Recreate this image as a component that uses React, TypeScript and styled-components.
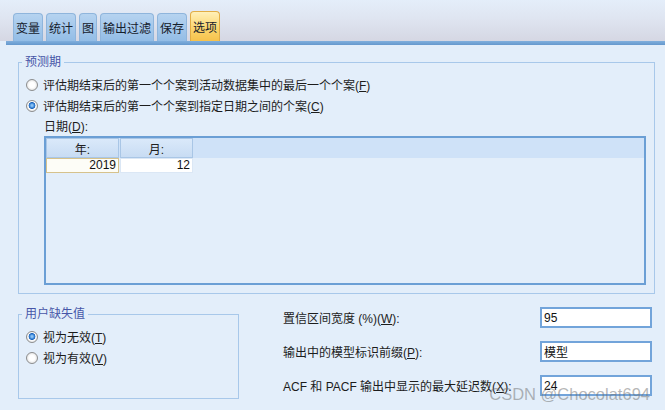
import React from "react";
import styled, { createGlobalStyle, css } from "styled-components";

const GlobalStyle = createGlobalStyle`
  html, body {
    margin: 0;
    padding: 0;
  }
  body {
    background: #e3eefa;
    font-family: "Liberation Sans", "Noto Sans CJK SC", sans-serif;
    font-size: 12px;
    color: #1c1c1c;
  }
`;

const Window = styled.div`
  position: relative;
  width: 665px;
  height: 410px;
  overflow: hidden;
  background: #e3eefa;
  display: flex;
  flex-direction: column;
`;

const TabStrip = styled.div`
  height: 41px;
  box-sizing: border-box;
  display: flex;
  align-items: flex-end;
  gap: 3px;
  padding-left: 13px;
  background: linear-gradient(#e4eefa 0%, #dfe5f1 45%, #d5d7e3 100%);
`;

const TabButton = styled.div<{ $active?: boolean }>`
  height: 28px;
  box-sizing: border-box;
  padding: 0 2px;
  display: flex;
  align-items: center;
  justify-content: center;
  border: 1px solid #8fb5dc;
  border-bottom: none;
  border-radius: 4px 4px 0 0;
  background: linear-gradient(#b6d3f0, #93bde6);
  color: #15202c;
  font-size: 12px;

  ${(p) =>
    p.$active &&
    css`
      height: 30px;
      border-color: #e2ad45;
      background: linear-gradient(#fff0b8, #fbd36a 60%, #f6c24c);
    `}
`;

const TabBar = styled.div`
  height: 4px;
  margin-left: 6px;
  background: linear-gradient(#80afdd, #6598cd);
`;

const Content = styled.div`
  padding: 9px 10px 0 18px;
  display: flex;
  flex-direction: column;
`;

const GroupBox = styled.fieldset<{ $width?: number; $height?: number }>`
  margin: 0;
  min-width: 0;
  padding: 0 8px 8px 7px;
  border: 1px solid #a8c8ea;
  box-sizing: border-box;
  ${(p) => p.$width && `width: ${p.$width}px;`}
  ${(p) => p.$height && `height: ${p.$height}px;`}
`;

const GroupTitle = styled.legend`
  margin-left: -4px;
  padding: 0 3px;
  line-height: 16px;
  color: #4756a8;
  font-size: 12px;
`;

const RadioRow = styled.label<{ $first?: boolean }>`
  display: flex;
  align-items: center;
  gap: 5px;
  height: 21px;
  ${(p) => p.$first && "margin-top: 4px;"}
`;

const RadioDot = styled.span<{ $checked?: boolean }>`
  width: 12px;
  height: 12px;
  box-sizing: border-box;
  border-radius: 50%;
  border: 1px solid #8c8d8e;
  background: radial-gradient(circle, #ffffff 0 38%, #ececec 65%, #cdcdcd 100%);
  ${(p) =>
    p.$checked &&
    css`
      background: radial-gradient(
        circle at 50% 45%,
        #8cc2f3 0 12%,
        #3a87da 30%,
        #1f63b8 42%,
        #ffffff 50%,
        #e9e9e9 72%,
        #c8c8c8 100%
      );
    `}
`;

const FieldLabel = styled.div`
  margin: 3px 0 0 18px;
  line-height: 16px;
`;

const DateTable = styled.div`
  margin: 1px 0 0 18px;
  height: 149px;
  box-sizing: border-box;
  border: 2px solid #6b9fd5;
  display: flex;
  flex-direction: column;
`;

const HeaderRow = styled.div`
  height: 20px;
  display: flex;
  background: #cfe2f8;
`;

const HeaderCell = styled.div`
  width: 73px;
  box-sizing: border-box;
  margin-right: 1px;
  border: 1px solid #a9c6e6;
  background: linear-gradient(#dae9fa, #c8dcf3);
  display: flex;
  align-items: center;
  justify-content: center;
  color: #202020;
`;

const DataRow = styled.div`
  height: 15px;
  display: flex;
`;

const DataCell = styled.div<{ $focused?: boolean }>`
  width: 73px;
  box-sizing: border-box;
  margin-right: 1px;
  border: 1px solid ${(p) => (p.$focused ? "#d6c28c" : "#dbe7f5")};
  background: ${(p) => (p.$focused ? "#fdfdf7" : "#ffffff")};
  text-align: right;
  padding-right: 2px;
  line-height: 13px;
  color: #111;
`;

const BottomRow = styled.div`
  margin-top: 12px;
  display: flex;
  align-items: flex-start;
`;

const OptionGrid = styled.div`
  flex: 1;
  margin: 1px 3px 0 44px;
  display: grid;
  grid-template-columns: 1fr 112px;
  row-gap: 13px;
  align-items: center;
`;

const OptionLabel = styled.div`
  color: #1c1c1c;
`;

const TextBox = styled.div`
  height: 21px;
  box-sizing: border-box;
  border: 2px solid #72a4da;
  background: #ffffff;
  padding: 0 2px;
  display: flex;
  align-items: center;
  font-size: 12px;
  color: #111;
`;

const Watermark = styled.div`
  position: absolute;
  right: 15px;
  bottom: 6px;
  font-family: "Liberation Sans", sans-serif;
  font-size: 16.5px;
  color: rgba(110, 110, 110, 0.5);
  pointer-events: none;
`;

const tabs = ["变量", "统计", "图", "输出过滤", "保存", "选项"];

export default function App() {
  return (
    <Window>
      <GlobalStyle />
      <TabStrip>
        {tabs.map((t) => (
          <TabButton key={t} $active={t === "选项"}>
            {t}
          </TabButton>
        ))}
      </TabStrip>
      <TabBar />
      <Content>
        <GroupBox>
          <GroupTitle>预测期</GroupTitle>
          <RadioRow $first>
            <RadioDot />
            <span>
              评估期结束后的第一个个案到活动数据集中的最后一个个案(<u>F</u>)
            </span>
          </RadioRow>
          <RadioRow>
            <RadioDot $checked />
            <span>
              评估期结束后的第一个个案到指定日期之间的个案(<u>C</u>)
            </span>
          </RadioRow>
          <FieldLabel>
            日期(<u>D</u>):
          </FieldLabel>
          <DateTable>
            <HeaderRow>
              <HeaderCell>年:</HeaderCell>
              <HeaderCell>月:</HeaderCell>
            </HeaderRow>
            <DataRow>
              <DataCell $focused>2019</DataCell>
              <DataCell>12</DataCell>
            </DataRow>
          </DateTable>
        </GroupBox>
        <BottomRow>
          <GroupBox $width={221} $height={93}>
            <GroupTitle>用户缺失值</GroupTitle>
            <RadioRow $first>
              <RadioDot $checked />
              <span>
                视为无效(<u>T</u>)
              </span>
            </RadioRow>
            <RadioRow>
              <RadioDot />
              <span>
                视为有效(<u>V</u>)
              </span>
            </RadioRow>
          </GroupBox>
          <OptionGrid>
            <OptionLabel>
              置信区间宽度 (%)(<u>W</u>):
            </OptionLabel>
            <TextBox>95</TextBox>
            <OptionLabel>
              输出中的模型标识前缀(<u>P</u>):
            </OptionLabel>
            <TextBox>模型</TextBox>
            <OptionLabel>
              ACF 和 PACF 输出中显示的最大延迟数(<u>X</u>):
            </OptionLabel>
            <TextBox>24</TextBox>
          </OptionGrid>
        </BottomRow>
      </Content>
      <Watermark>CSDN @Chocolat694</Watermark>
    </Window>
  );
}
